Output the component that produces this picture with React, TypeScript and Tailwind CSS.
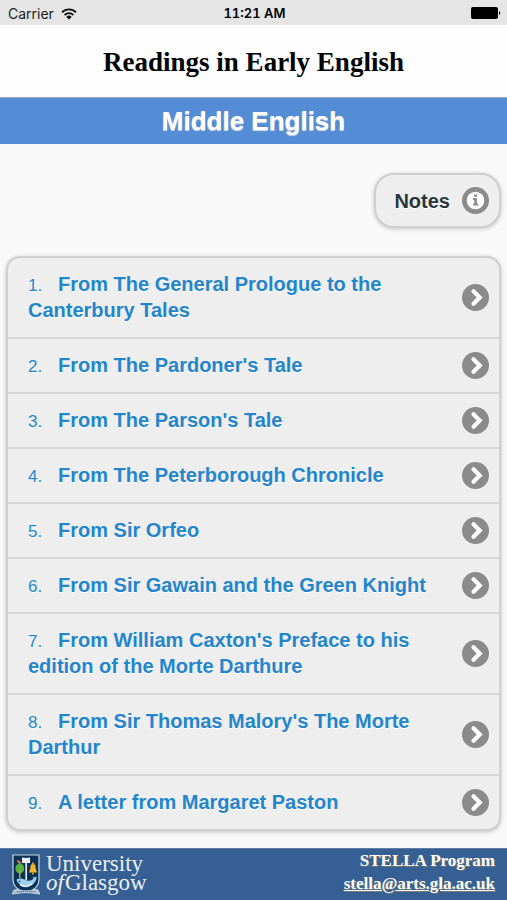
import React from "react";

const readings = [
  "From The General Prologue to the Canterbury Tales",
  "From The Pardoner's Tale",
  "From The Parson's Tale",
  "From The Peterborough Chronicle",
  "From Sir Orfeo",
  "From Sir Gawain and the Green Knight",
  "From William Caxton's Preface to his edition of the Morte Darthure",
  "From Sir Thomas Malory's The Morte Darthur",
  "A letter from Margaret Paston",
];

const WifiIcon = () => (
  <svg viewBox="0 0 16 12" className="h-3 w-4" aria-hidden="true">
    <g fill="none" stroke="#111" strokeWidth="1.8">
      <path d="M1 4.3a10 10 0 0 1 14 0" />
      <path d="M3.6 7a6.3 6.3 0 0 1 8.8 0" />
    </g>
    <path d="M8 11.6 5.3 8.9a3.9 3.9 0 0 1 5.4 0Z" fill="#111" />
  </svg>
);

const BatteryIcon = () => (
  <svg viewBox="0 0 30 12" className="h-3 w-[30px]" aria-hidden="true">
    <rect width="27" height="12" rx="2" fill="#000" />
    <path d="M28 4a2.2 2.2 0 0 1 0 4Z" fill="#000" />
  </svg>
);

const InfoIcon = () => (
  <svg viewBox="0 0 27 27" className="size-[27px] shrink-0" aria-hidden="true">
    <circle cx="13.5" cy="13.5" r="13.5" fill="#8b8b8b" />
    <circle cx="13.5" cy="13.5" r="8.8" fill="#fff" />
    <path
      d="M12 7.6h3v2.2h-3zM11 11.1h4v5.7h1.3v1.8H11v-1.8h1.3v-3.9H11z"
      fill="#8b8b8b"
    />
  </svg>
);

const ArrowIcon = () => (
  <svg viewBox="0 0 27 27" className="-my-1 size-[27px] shrink-0" aria-hidden="true">
    <circle cx="13.5" cy="13.5" r="13.5" fill="#8b8b8b" />
    <path
      d="m11.5 7.3 6.2 6.2-6.2 6.2"
      fill="none"
      stroke="#fff"
      strokeWidth="4.2"
      strokeLinecap="round"
    />
  </svg>
);

// Shield with the tree, bell, book and fish over a motto scroll
const Crest = () => (
  <svg viewBox="0 0 28 42" className="h-[42px] w-7 shrink-0" aria-hidden="true">
    <path
      d="M1 1h26v24c0 7-4 10-8 12h-10C5 35 1 32 1 25Z"
      fill="#0b3156"
      stroke="#c3d7e8"
      strokeWidth="1.2"
    />
    <path d="M10 3.5 14 4l4-.5v5.5h-8Z" fill="#eef3f7" />
    <path d="M14.2 9v17" stroke="#e2ebf2" strokeWidth="1.7" />
    <path d="m5.5 6.5 3 3" stroke="#e0873b" strokeWidth="2" />
    <ellipse cx="7.8" cy="14.5" rx="4.4" ry="5" fill="#58b045" />
    <path d="M7.8 16v8" stroke="#b5b648" strokeWidth="1.4" />
    <path
      d="M21 9.5c2 .2 2.6 2 2.7 5l1.3 4h-8l1.3-4c.1-3 .7-4.8 2.7-5Z"
      fill="#f0b429"
    />
    <path d="M20 8.5h2v2h-2zM20 18.5h2v2h-2z" fill="#d99b22" />
    <path
      d="M4.5 25.5c2.5-1.5 6-1 9 .5 3 1.3 6 .8 8-1.5l-.5-2 2 1 2-1-1 3.5c-2 4.5-6 7-10.5 6.5-5-.5-8-3-9-7Z"
      fill="#9fcfee"
    />
    <path d="M8 30.5c4 3 9 2.5 12-1" fill="none" stroke="#e4f1fa" strokeWidth="1.6" />
    <circle cx="7.5" cy="27.5" r=".8" fill="#0b3156" />
    <path
      d="m0 40 2-4 4-.5c4 2 12 2 16 0l4 .5 2 4-5-.5c-6-1.2-12-1.2-18 0Z"
      fill="#a9bed1"
      stroke="#d5e2ec"
      strokeWidth=".8"
    />
    <path d="M5 38c5-.8 13-.8 18 0" fill="none" stroke="#3d5f80" strokeDasharray="1.2 .8" />
  </svg>
);

const StatusBar = () => (
  <div className="grid h-[25px] grid-cols-3 items-center bg-[#e5e5e5] pr-1.5 pl-2 font-['Inter','Liberation_Sans',sans-serif] text-sm text-[#222]">
    <div className="flex items-center gap-[7px] pt-0.5">
      <span>Carrier</span>
      <WifiIcon />
    </div>
    <span className="pt-0.5 text-center text-[13px] font-semibold whitespace-nowrap text-black tabular-nums">11:21 AM</span>
    <div className="flex justify-end">
      <BatteryIcon />
    </div>
  </div>
);

const Footer = () => (
  <footer className="flex h-[52px] items-center justify-between border-t border-[#5f7fa8] bg-[#365f93] px-3 font-['Liberation_Serif',serif] text-white">
    <div className="flex items-center gap-1.5">
      <Crest />
      <div className="pb-1 text-[23px] leading-[19px] whitespace-nowrap text-[#eaf1fa]">
        <p>University</p>
        <p className="flex gap-px">
          <i>of</i>
          <span>Glasgow</span>
        </p>
      </div>
    </div>
    <div className="pb-1.5 text-right text-[17px] leading-[23px] font-bold text-shadow-[1px_1px_1px_#777]">
      <p>STELLA Program</p>
      <a href="mailto:stella@arts.gla.ac.uk" className="underline">
        stella@arts.gla.ac.uk
      </a>
    </div>
  </footer>
);

const App = () => {
  return (
    <div className="flex min-h-screen flex-col bg-[#f9f9f9] font-['Liberation_Sans',Arial,sans-serif]">
      <StatusBar />

      <header>
        <h1 className="bg-[#fdfdfd] pt-0.5 text-center font-['Liberation_Serif',serif] text-[27px] leading-[70px] font-bold text-black">
          Readings in Early English
        </h1>
        <h2 className="border-t border-[#9aabc0] bg-[#548cd5] pt-px text-center text-[26px] leading-[45px] font-bold text-white text-shadow-[0_1px_1px_#ddd]">
          Middle English
        </h2>
      </header>

      <main className="flex-1 px-1.5 pt-[29px] pb-[17px]">
        <div className="flex justify-end">
          <button
            type="button"
            className="flex h-[55px] items-center gap-3 rounded-[20px] border-2 border-[#cfcfcf] bg-[#eee] pr-2.5 pl-[18px] text-xl font-bold text-[#28373e] shadow-[0_1px_4px_rgba(0,0,0,0.22)] text-shadow-[0_1px_0_#fff]"
          >
            Notes
            <InfoIcon />
          </button>
        </div>

        <ol className="mt-7 overflow-hidden rounded-[14px] border-2 border-[#cfcfcf] bg-[#eee] shadow-[0_1px_4px_rgba(0,0,0,0.22)]">
          {readings.map((title, index) => (
            <li key={title} className="border-b-2 border-[#d6d6d6] last:border-b-0">
              <a
                href={`#reading-${index + 1}`}
                className="flex items-center justify-between pt-[13px] pr-2.5 pb-3.5 pl-5 text-xl leading-[26px] font-bold text-[#2485cb] text-shadow-[0_1px_0_#fff]"
              >
                <span className="mr-6">
                  <span className="inline-block w-[30px] text-[17px] leading-none font-normal">{index + 1}.</span>
                  {title}
                </span>
                <ArrowIcon />
              </a>
            </li>
          ))}
        </ol>
      </main>

      <Footer />
    </div>
  );
};

export default App;
